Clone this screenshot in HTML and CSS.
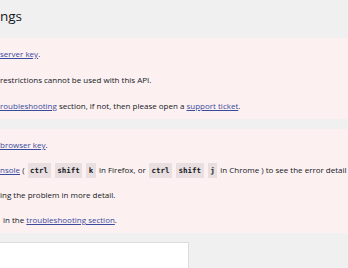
FILE: index.html
```html
<!DOCTYPE html>
<html lang="en">
<head>
  <meta charset="UTF-8" />
  <meta name="viewport" content="width=device-width, initial-scale=1.0"/>
  <title>Settings</title>
  <link rel="stylesheet" href="styles.css">
</head>
<body>
  <div class="wrap">
    <h1 class="page-title">ngs</h1>

    <div class="notice">
      <p><a href="#">server key</a>.</p>
      <p>restrictions cannot be used with this API.</p>
      <p><a href="#">roubleshooting</a> section, if not, then please open a <a href="#">support ticket</a>.</p>
    </div>

    <div class="notice">
      <p><a href="#">browser key</a>.</p>
      <p><a href="#">nsole</a> ( <kbd>ctrl</kbd> <kbd>shift</kbd> <kbd>k</kbd> in Firefox, or <kbd>ctrl</kbd> <kbd>shift</kbd> <kbd>j</kbd> in Chrome ) to see the error detail</p>
      <p>ing the problem in more detail.</p>
      <p class="indent">in the <a href="#">troubleshooting section</a>.</p>
    </div>

    <div class="card"></div>
  </div>
</body>
</html>
```

FILE: styles.css
```css
body {
  margin: 0; padding: 0;
  background: #f0f0f1;
  color: #14181c;
  font-family: "Open Sans", "Noto Sans", sans-serif;
  font-size: 8px;
  overflow: hidden;
}

.wrap {
  width: 100%;
  overflow: hidden;
}

.page-title {
  margin: 0;
  padding: 6px 0 12px;
  font-size: 13.5px;
  font-weight: 400;
  line-height: 20px;
}

.notice {
  background: #fcf0f1;
  padding: 6px 0 3px;
  margin-bottom: 10px;
}
.notice p {
  margin: 0 0 6px;
  line-height: 20px;
  white-space: nowrap;
}
.notice + .notice p { margin-bottom: 5px; }
.notice p:last-child { margin-bottom: 0; }
.notice p.indent { padding-left: 3px; }

.notice a {
  color: #3a4a9c;
  text-decoration: underline;
}

kbd {
  display: inline-block;
  margin: 0 1px;
  padding: 0 2.5px;
  line-height: 15px;
  background: rgba(0,0,0,0.07);
  font-family: "DejaVu Sans Mono", monospace;
  font-weight: bold;
  font-size: 7.5px;
}

.card {
  width: 188px;
  height: 40px;
  margin-top: -1px;
  background: #fff;
  border: 1px solid #dcdcde;
  border-left: none;
}
```
